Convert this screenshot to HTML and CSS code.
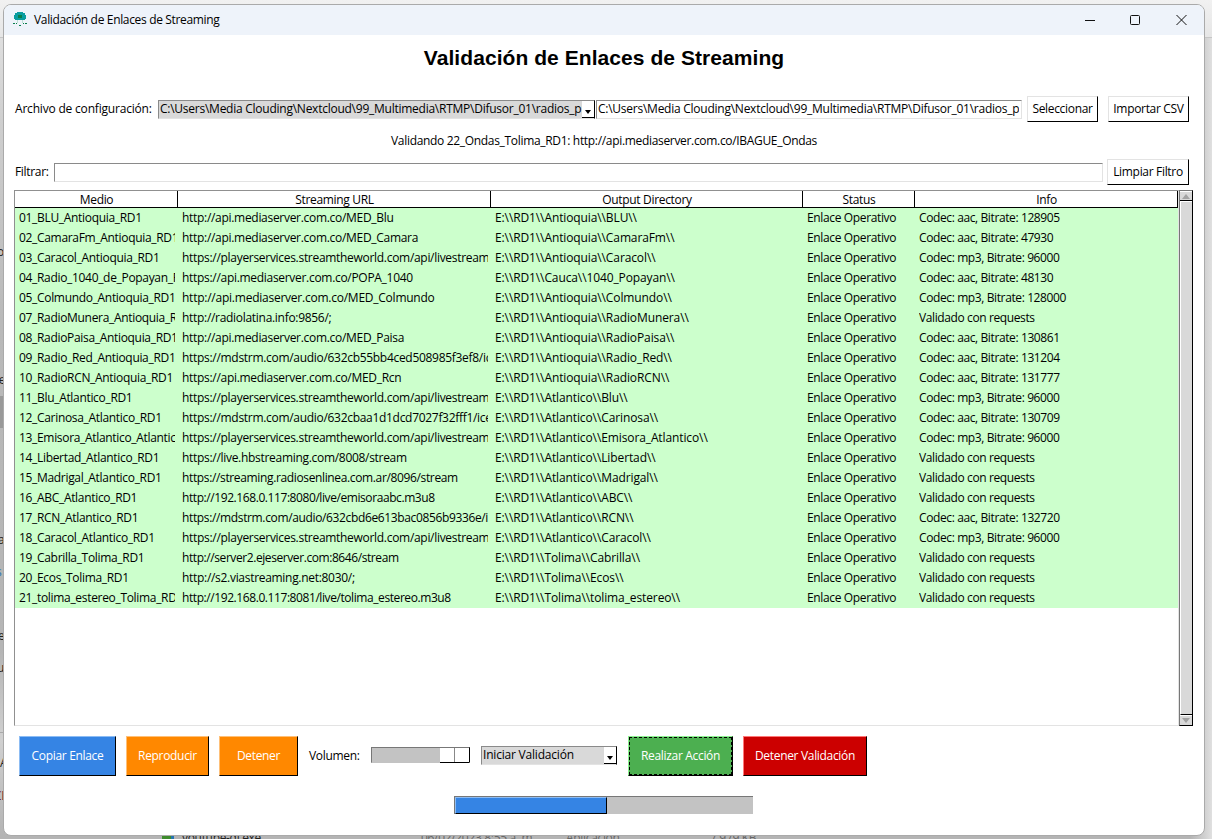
FILE: index.html
```
<!DOCTYPE html>
<html lang="es">
<head>
<meta charset="utf-8">
<title>Validación de Enlaces de Streaming</title>
<link rel="stylesheet" href="styles.css">
</head>
<body>
<div class="desktop">
  <div class="strip-top"></div>
  <div class="strip-mark"></div>
  <div class="strip-line"></div>
  <span class="bg-text" style="left:-3px;top:244px">o</span>
  <span class="bg-text" style="left:-4px;top:372px">le</span>
  <span class="bg-text" style="left:-2px;top:532px">a</span>
  <span class="bg-text blue" style="left:-4px;top:564px">s</span>
  <span class="bg-text" style="left:-2px;top:628px">e</span>
  <span class="bg-text" style="left:-3px;top:660px">u</span>
  <span class="bg-text" style="left:0;top:755px">A</span>
  <span class="bg-text red" style="left:-6px;top:788px">CL</span>
  <span class="file-icon"></span>
  <span class="bg-text" style="left:182px;top:830px">youtube-dl.exe</span>
  <span class="bg-text dim" style="left:421px;top:830px">06/02/2023 8:55 a. m.</span>
  <span class="bg-text dim" style="left:566px;top:830px">Aplicación</span>
  <span class="bg-text dim" style="left:710px;top:830px">7.979 KB</span>
</div>
<main class="window">
  <header class="titlebar">
    <svg class="app-icon" width="14" height="14" viewBox="0 0 14 14" shape-rendering="crispEdges">
      <path fill="#0a9da0" d="M4 0h6v1h2v2h1v4h-1v1H2V7H1V3h1V1h2z"/>
      <path fill="#087f4b" d="M5 3h4v3H5zM0 11h2v1H0zM3 11h1v1H3zM10 11h1v1h-1zM12 11h2v1h-2zM6 13h2v1H6z"/>
      <path fill="#b9e2d2" d="M4 8h1v3H4zM9 8h1v3H9z"/>
    </svg>
    <span class="caption">Validación de Enlaces de Streaming</span>
    <svg class="controls" width="104" height="12" viewBox="0 0 104 12" fill="none" stroke="#111">
      <path d="M0 6.5h10"/><rect x="45.5" y="1.5" width="9" height="9" rx="1"/><path d="M91.5 1l10 10m0-10l-10 10"/>
    </svg>
  </header>
  <h1 class="heading">Validación de Enlaces de Streaming</h1>
  <section class="row config">
    <label class="lbl">Archivo de configuración:</label>
    <div class="combo combo-path"><span class="txt">C:\Users\Media Clouding\Nextcloud\99_Multimedia\RTMP\Difusor_01\radios_p</span><i class="arrow"></i></div>
    <div class="entry entry-path"><span class="txt">C:\Users\Media Clouding\Nextcloud\99_Multimedia\RTMP\Difusor_01\radios_p</span></div>
    <button class="btn b-sel">Seleccionar</button>
    <button class="btn b-imp">Importar CSV</button>
  </section>
  <p class="status">Validando 22_Ondas_Tolima_RD1: http://api.mediaserver.com.co/IBAGUE_Ondas</p>
  <section class="row filter">
    <label class="lbl">Filtrar:</label>
    <div class="entry entry-filter"></div>
    <button class="btn b-lim">Limpiar Filtro</button>
  </section>
  <section class="list">
    <div class="tree">
      <div class="thead"><b>Medio</b><b>Streaming URL</b><b>Output Directory</b><b>Status</b><b>Info</b></div>
      <div class="tr"><span>01_BLU_Antioquia_RD1</span><span>http://api.mediaserver.com.co/MED_Blu</span><span>E:\\RD1\\Antioquia\\BLU\\</span><span>Enlace Operativo</span><span>Codec: aac, Bitrate: 128905</span></div>
      <div class="tr"><span>02_CamaraFm_Antioquia_RD1</span><span>http://api.mediaserver.com.co/MED_Camara</span><span>E:\\RD1\\Antioquia\\CamaraFm\\</span><span>Enlace Operativo</span><span>Codec: aac, Bitrate: 47930</span></div>
      <div class="tr"><span>03_Caracol_Antioquia_RD1</span><span>https://playerservices.streamtheworld.com/api/livestream</span><span>E:\\RD1\\Antioquia\\Caracol\\</span><span>Enlace Operativo</span><span>Codec: mp3, Bitrate: 96000</span></div>
      <div class="tr"><span>04_Radio_1040_de_Popayan_R</span><span>https://api.mediaserver.com.co/POPA_1040</span><span>E:\\RD1\\Cauca\\1040_Popayan\\</span><span>Enlace Operativo</span><span>Codec: aac, Bitrate: 48130</span></div>
      <div class="tr"><span>05_Colmundo_Antioquia_RD1</span><span class="loose">http://api.mediaserver.com.co/MED_Colmundo</span><span>E:\\RD1\\Antioquia\\Colmundo\\</span><span>Enlace Operativo</span><span>Codec: mp3, Bitrate: 128000</span></div>
      <div class="tr"><span>07_RadioMunera_Antioquia_R</span><span>http://radiolatina.info:9856/;</span><span>E:\\RD1\\Antioquia\\RadioMunera\\</span><span>Enlace Operativo</span><span>Validado con requests</span></div>
      <div class="tr"><span>08_RadioPaisa_Antioquia_RD1</span><span>http://api.mediaserver.com.co/MED_Paisa</span><span>E:\\RD1\\Antioquia\\RadioPaisa\\</span><span>Enlace Operativo</span><span>Codec: aac, Bitrate: 130861</span></div>
      <div class="tr"><span>09_Radio_Red_Antioquia_RD1</span><span>https://mdstrm.com/audio/632cb55bb4ced508985f3ef8/ic</span><span>E:\\RD1\\Antioquia\\Radio_Red\\</span><span>Enlace Operativo</span><span>Codec: aac, Bitrate: 131204</span></div>
      <div class="tr"><span>10_RadioRCN_Antioquia_RD1</span><span>https://api.mediaserver.com.co/MED_Rcn</span><span>E:\\RD1\\Antioquia\\RadioRCN\\</span><span>Enlace Operativo</span><span>Codec: aac, Bitrate: 131777</span></div>
      <div class="tr"><span>11_Blu_Atlantico_RD1</span><span>https://playerservices.streamtheworld.com/api/livestream</span><span>E:\\RD1\\Atlantico\\Blu\\</span><span>Enlace Operativo</span><span>Codec: mp3, Bitrate: 96000</span></div>
      <div class="tr"><span>12_Carinosa_Atlantico_RD1</span><span>https://mdstrm.com/audio/632cbaa1d1dcd7027f32fff1/ice</span><span>E:\\RD1\\Atlantico\\Carinosa\\</span><span>Enlace Operativo</span><span>Codec: aac, Bitrate: 130709</span></div>
      <div class="tr"><span>13_Emisora_Atlantico_Atlantic</span><span>https://playerservices.streamtheworld.com/api/livestream</span><span>E:\\RD1\\Atlantico\\Emisora_Atlantico\\</span><span>Enlace Operativo</span><span>Codec: mp3, Bitrate: 96000</span></div>
      <div class="tr"><span>14_Libertad_Atlantico_RD1</span><span>https://live.hbstreaming.com/8008/stream</span><span>E:\\RD1\\Atlantico\\Libertad\\</span><span>Enlace Operativo</span><span>Validado con requests</span></div>
      <div class="tr"><span>15_Madrigal_Atlantico_RD1</span><span class="snug">https://streaming.radiosenlinea.com.ar/8096/stream</span><span>E:\\RD1\\Atlantico\\Madrigal\\</span><span>Enlace Operativo</span><span>Validado con requests</span></div>
      <div class="tr"><span>16_ABC_Atlantico_RD1</span><span class="tight">http://192.168.0.117:8080/live/emisoraabc.m3u8</span><span>E:\\RD1\\Atlantico\\ABC\\</span><span>Enlace Operativo</span><span>Validado con requests</span></div>
      <div class="tr"><span>17_RCN_Atlantico_RD1</span><span class="snug">https://mdstrm.com/audio/632cbd6e613bac0856b9336e/i</span><span>E:\\RD1\\Atlantico\\RCN\\</span><span>Enlace Operativo</span><span>Codec: aac, Bitrate: 132720</span></div>
      <div class="tr"><span>18_Caracol_Atlantico_RD1</span><span>https://playerservices.streamtheworld.com/api/livestream</span><span>E:\\RD1\\Atlantico\\Caracol\\</span><span>Enlace Operativo</span><span>Codec: mp3, Bitrate: 96000</span></div>
      <div class="tr"><span>19_Cabrilla_Tolima_RD1</span><span class="tight">http://server2.ejeserver.com:8646/stream</span><span>E:\\RD1\\Tolima\\Cabrilla\\</span><span>Enlace Operativo</span><span>Validado con requests</span></div>
      <div class="tr"><span>20_Ecos_Tolima_RD1</span><span>http://s2.viastreaming.net:8030/;</span><span>E:\\RD1\\Tolima\\Ecos\\</span><span>Enlace Operativo</span><span>Validado con requests</span></div>
      <div class="tr"><span>21_tolima_estereo_Tolima_RD</span><span class="tight">http://192.168.0.117:8081/live/tolima_estereo.m3u8</span><span>E:\\RD1\\Tolima\\tolima_estereo\\</span><span>Enlace Operativo</span><span>Validado con requests</span></div>
    </div>
    <div class="scroll"><i class="sb"><svg width="8" height="5" viewBox="0 0 8 5"><path d="M0 5L4 0l4 5z" fill="#a3a3a3"/></svg></i><i class="thumb"></i><i class="sb"><svg width="8" height="5" viewBox="0 0 8 5"><path d="M0 0l4 5 4-5z" fill="#a3a3a3"/></svg></i></div>
  </section>
  <section class="actions">
    <button class="act copy">Copiar Enlace</button>
    <button class="act play">Reproducir</button>
    <button class="act stop">Detener</button>
    <label class="lbl vol">Volumen:</label>
    <div class="scale"><i class="knob"></i></div>
    <div class="combo combo-act"><span class="txt">Iniciar Validación</span><i class="arrow"></i></div>
    <button class="act run">Realizar Acción</button>
    <button class="act halt">Detener Validación</button>
  </section>
  <div class="progress"><i class="bar"></i></div>
</main>
</body>
</html>
```
FILE: styles.css
```
* { box-sizing: border-box; }
html, body { margin: 0; width: 1212px; height: 839px; overflow: hidden; }
body {
  position: relative;
  font: 12px/16px "Open Sans", "Noto Sans", sans-serif;
  letter-spacing: -0.32px;
  color: #000;
  white-space: nowrap;
}
.desktop {
  position: absolute; inset: 0; overflow: hidden;
  background: linear-gradient(90deg, transparent 1190px, #cfcfcf 1204px, #e0e0e0 1212px),
    linear-gradient(#e6e6e6, #cfcfcf 120px, #b9b9b9 320px, #b5b5b5 650px, #d0d0d0 740px, #b4b4b4 836px);
}
.strip-top { position: absolute; inset: 0 0 auto 0; height: 38px; background: linear-gradient(#f1f1f1, #e6e6e6); border-bottom: 1px solid #c6c6c6; }
.strip-mark { position: absolute; left: 0; top: 396px; width: 5px; height: 32px; background: #999; }
.strip-line { position: absolute; left: 0; top: 732px; width: 5px; height: 1px; background: #aaa; }
.bg-text { position: absolute; color: #222; }
.bg-text.blue { color: #2f78b5; }
.bg-text.red { color: #702030; }
.bg-text.dim { color: #666; }
.file-icon { position: absolute; left: 162px; top: 834px; width: 12px; height: 8px; background: linear-gradient(90deg, #3d8b2c 9px, #2675b0 9px); }
.window {
  position: absolute; left: 3px; top: 4px; width: 1202px; height: 832px;
  display: flex; flex-direction: column;
  background: #fff; border: 1px solid #aaa; border-radius: 8px; overflow: hidden;
}
.titlebar { height: 30px; flex: none; display: flex; align-items: center; padding: 0 18px 0 9px; background: #eef3fa; }
.app-icon { margin-top: -3px; }
.caption { margin-left: 7px; letter-spacing: -0.34px; }
.controls { margin-left: auto; margin-right: -3px; }
.heading { margin: 10px 0 0; height: 26px; font: bold 21px/26px "Liberation Sans", Arial, sans-serif; letter-spacing: 0.06px; text-align: center; }
.row { display: flex; align-items: center; height: 26px; flex: none; padding-left: 11px; }
.config { margin-top: 25px; }
.lbl { flex: none; }
.config .lbl { width: 143px; letter-spacing: -0.19px; }
.txt { display: block; overflow: hidden; }
.combo, .entry { height: 19px; line-height: 16px; flex: none; display: flex; border: 1px solid; border-color: #8a8a8a #e3e3e3 #e3e3e3 #8a8a8a; padding-left: 1px; letter-spacing: -0.25px; }
.combo { background: #d9d9d9; border-right-color: #000; }
.combo .txt { flex: 1; }
.combo-path { width: 437px; margin-right: 1px; }
.entry-path { width: 426px; }
.arrow { width: 12px; flex: none; background: #fff; border-bottom: 1px solid #000; display: flex; justify-content: center; align-items: flex-end; padding-bottom: 3px; }
.arrow::after { content: ""; border: 3.5px solid transparent; border-top: 4px solid #000; border-bottom: 0; }
.btn, .act { font: inherit; letter-spacing: inherit; padding: 0; flex: none; color: #000; background: #fff; border: 1px solid; border-color: #e3e3e3 #000 #000 #e3e3e3; border-radius: 0; }
.btn { height: 26px; }
.b-sel { width: 71px; margin-left: 5px; }
.b-imp { width: 81px; margin-left: 10px; }
.status { margin: 10px 0 0; line-height: 18px; text-align: center; }
.filter { margin-top: 9px; }
.filter .lbl { width: 39px; }
.entry-filter { width: 1049px; }
.b-lim { width: 82px; margin-left: 4px; }
.list { display: flex; margin: 5px 0 0 10px; height: 536px; flex: none; }
.tree { width: 1165px; border: 1px solid; border-color: #909090 #e3e3e3 #e3e3e3 #909090; }
.thead, .tr { display: grid; grid-template-columns: 163px 313px 312px 112px 263px; }
.thead { height: 17px; }
.thead b { font-weight: normal; text-align: center; line-height: 18px; height: 17px; padding-left: 1px; border-right: 1px solid #000; border-bottom: 1px solid #000; }
.tr { height: 20px; line-height: 20px; background: #cfc; }
.tr span { margin: 0 3px 0 4px; overflow: hidden; }
.tr span:nth-child(2) { letter-spacing: -0.3px; }
.tr span:nth-child(3) { letter-spacing: -0.11px; }
.tr span:nth-child(4) { letter-spacing: -0.36px; }
.tr span:nth-child(5) { letter-spacing: -0.39px; }
.tr span.loose { letter-spacing: -0.24px; }
.tr span.snug { letter-spacing: -0.36px; }
.tr span.tight { letter-spacing: -0.42px; }
.scroll { width: 14px; display: flex; flex-direction: column; background: #c3c3c3; border: 1px solid; border-color: #777 #000 #000 #777; }
.sb { height: 10px; flex: none; display: flex; align-items: center; justify-content: center; background: #d9d9d9; border-bottom: 1px solid #000; border-top: 1px solid #fff; }
.sb:last-child { border-bottom: 0; }
.thumb { flex: 1; background: #d9d9d9; border: solid; border-width: 1px 0 1px 1px; border-color: #fff #000 #000 #fff; }
.actions { display: flex; align-items: center; height: 40px; flex: none; margin-top: 10px; padding-left: 15px; }
.act { height: 40px; color: #fff; }
.copy { width: 97px; background: #3584e4; border-color: #8cbcf4 #000 #000 #8cbcf4; }
.play { width: 83px; margin-left: 10px; background: #ff8800; border-color: #ffc078 #000 #000 #ffc078; }
.stop { width: 79px; margin-left: 10px; background: #ff8800; border-color: #ffc078 #000 #000 #ffc078; }
.vol { margin-left: 11px; width: 62px; }
.scale { width: 99px; height: 16px; margin-top: -2px; background: #c3c3c3; border: 1px solid; border-color: #777 #000 #c3c3c3 #777; display: flex; justify-content: flex-end; }
.knob { width: 29px; height: 15px; background: linear-gradient(90deg, #fff 14px, #888 14px, #888 15px, #fff 15px); border-bottom: 1px solid #000; }
.combo-act { width: 136px; margin: -1px 0 0 11px; letter-spacing: -0.2px; }
.run { width: 105px; margin-left: 11px; background: #4caf50; border-color: #8cf08f #000 #000 #8cf08f; outline: 1px dashed #000; outline-offset: -2px; }
.halt { width: 124px; margin-left: 10px; background: #c00; border-color: #ff7878 #000 #000 #ff7878; }
.progress { width: 299px; height: 18px; margin: 20px 0 0 450px; flex: none; background: #c3c3c3; border-top: 1px solid #777; border-left: 1px solid #777; }
.bar { display: block; width: 152px; height: 17px; background: #3584e4; border: 1px solid; border-color: #8cbcf4 #000 #000 #8cbcf4; }
```
